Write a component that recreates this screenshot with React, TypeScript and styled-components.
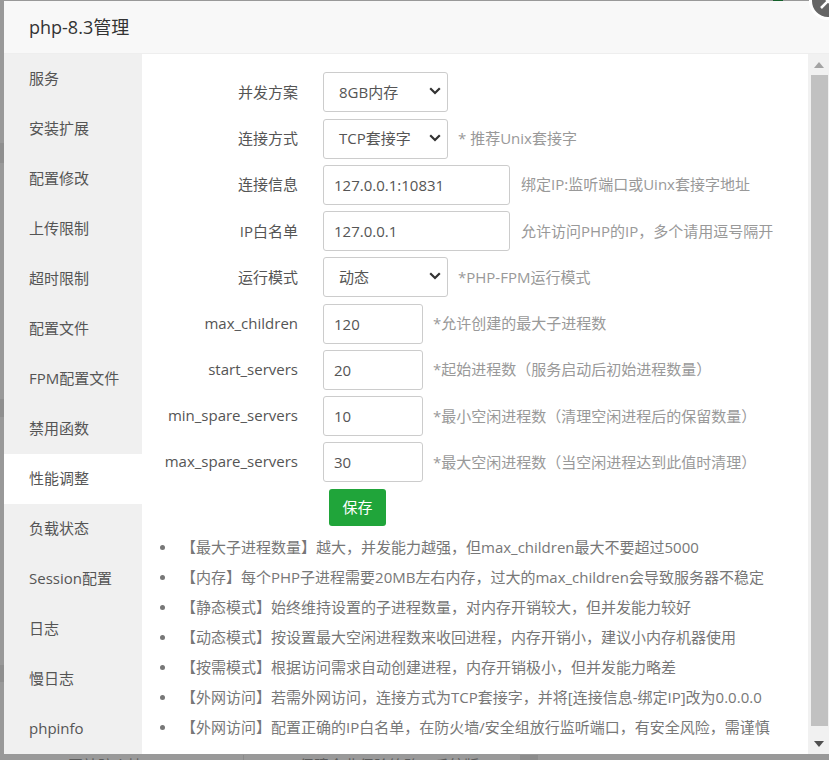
import { createGlobalStyle, styled } from 'styled-components'

const fontStack = `'Open Sans', 'Noto Sans CJK SC', sans-serif`

const GlobalStyle = createGlobalStyle`
    html, body {
        margin: 0;
        padding: 0;
        height: 760px;
        overflow: hidden;
        background: #999;
        font-family: ${fontStack};
    }
`

const Page = styled.div`
    position: relative;
    width: 829px;
    height: 760px;
    padding: 1px 0 0 4px;
    box-sizing: border-box;
    background: #999;
    overflow: hidden;
`

// the dimmed page that shows around the modal
const BackdropText = styled.span<{ $left: number }>`
    position: absolute;
    top: 755px;
    left: ${(p) => p.$left}px;
    font-size: 15px;
    line-height: 20px;
    color: #5c5c5c;
    white-space: nowrap;
`

const BackdropLine = styled.div`
    position: absolute;
    top: 755px;
    left: 243px;
    width: 1px;
    height: 5px;
    background: #8a8a8a;
`

const BackdropBlock = styled.div`
    position: absolute;
    top: 755px;
    left: 520px;
    width: 18px;
    height: 5px;
    background: #8c8c8c;
`

const BackdropBand = styled.div<{ $top: number; $h: number }>`
    position: absolute;
    left: 0;
    top: ${(p) => p.$top}px;
    width: 4px;
    height: ${(p) => p.$h}px;
    background: #8f8f8f;
`

const BackdropMark = styled.div`
    position: absolute;
    top: 0;
    left: 773px;
    width: 10px;
    height: 1px;
    background: #14602a;
`

const Modal = styled.div`
    position: relative;
    width: 825px;
    height: 753px;
    background: #fff;
    display: flex;
    flex-direction: column;
`

const Title = styled.div`
    height: 53px;
    flex: none;
    box-sizing: border-box;
    padding-left: 25px;
    line-height: 53px;
    font-size: 18px;
    color: #333;
    background: #f8f8f8;
    border-bottom: 1px solid #eee;
`

const Body = styled.div`
    flex: 1;
    display: flex;
    min-height: 0;
`

const Side = styled.div`
    width: 138px;
    flex: none;
    background: #f0f0f0;
`

const SideItem = styled.div<{ $active?: boolean }>`
    height: 50px;
    line-height: 48px;
    padding-left: 25px;
    font-size: 15px;
    color: #555;
    white-space: nowrap;
    background: ${(p) => (p.$active ? '#fff' : 'transparent')};
`

const Content = styled.div`
    flex: 1;
    box-sizing: border-box;
    padding-top: 18.3px;
    min-width: 0;
`

const Row = styled.div`
    display: flex;
    align-items: center;
    height: 40px;
    margin-bottom: 6.25px;
`

const Label = styled.label`
    width: 156px;
    margin-right: 25px;
    padding-bottom: 2px;
    flex: none;
    text-align: right;
    font-size: 15px;
    color: #555;
    white-space: nowrap;
`

const SelectBox = styled.div<{ $w: number }>`
    width: ${(p) => p.$w}px;
    height: 40px;
    box-sizing: border-box;
    display: flex;
    align-items: center;
    justify-content: space-between;
    padding: 0 6px 2px 15px;
    border: 1px solid #ccc;
    border-radius: 3px;
    font-size: 15px;
    color: #555;
`

const Input = styled.input<{ $w: number }>`
    width: ${(p) => p.$w}px;
    height: 40px;
    box-sizing: border-box;
    padding: 0 10px;
    border: 1px solid #ccc;
    border-radius: 3px;
    font: 15px ${fontStack};
    color: #555;
    outline: none;
`

const Hint = styled.span<{ $gap: number }>`
    margin-left: ${(p) => p.$gap}px;
    padding-bottom: 2px;
    font-size: 15px;
    color: #999;
    white-space: nowrap;
`

const SaveButton = styled.button`
    display: block;
    width: 57px;
    height: 37px;
    margin: 0 0 0 187px;
    padding: 0 0 2px;
    border: none;
    border-radius: 3px;
    background: #20a53a;
    color: #fff;
    font: 15px ${fontStack};
`

const Tips = styled.ul`
    margin: 7.5px 0 0;
    padding: 0 0 0 16px;
    list-style: none;
`

const Tip = styled.li`
    position: relative;
    height: 30px;
    line-height: 28px;
    padding-left: 23px;
    font-size: 15px;
    color: #777;
    white-space: nowrap;

    &::before {
        content: '';
        position: absolute;
        left: 2px;
        top: 12px;
        width: 5px;
        height: 5px;
        border-radius: 50%;
        background: #777;
    }
`

const Scrollbar = styled.div`
    width: 21px;
    flex: none;
    background: #f1f1f1;
    display: flex;
    flex-direction: column;
    align-items: center;
`

const ScrollArrow = styled.div`
    height: 21px;
    flex: none;
    display: flex;
    align-items: center;
    justify-content: center;
`

const ScrollThumb = styled.div`
    flex: 1;
    width: 17px;
    background: #c1c1c1;
    margin: 0 0 7px 1px;
`

const CloseButton = styled.div`
    position: absolute;
    top: -18px;
    left: 809px;
    width: 38px;
    height: 38px;
    box-sizing: border-box;
    border-radius: 50%;
    border: 3px solid #fff;
    background: #666;
    display: flex;
    align-items: center;
    justify-content: center;
`

const sideItems = [
    '服务',
    '安装扩展',
    '配置修改',
    '上传限制',
    '超时限制',
    '配置文件',
    'FPM配置文件',
    '禁用函数',
    '性能调整',
    '负载状态',
    'Session配置',
    '日志',
    '慢日志',
    'phpinfo',
]

const numberRows = [
    ['max_children', '120', '*允许创建的最大子进程数'],
    ['start_servers', '20', '*起始进程数（服务启动后初始进程数量）'],
    ['min_spare_servers', '10', '*最小空闲进程数（清理空闲进程后的保留数量）'],
    ['max_spare_servers', '30', '*最大空闲进程数（当空闲进程达到此值时清理）'],
]

const tips = [
    '【最大子进程数量】越大，并发能力越强，但max_children最大不要超过5000',
    '【内存】每个PHP子进程需要20MB左右内存，过大的max_children会导致服务器不稳定',
    '【静态模式】始终维持设置的子进程数量，对内存开销较大，但并发能力较好',
    '【动态模式】按设置最大空闲进程数来收回进程，内存开销小，建议小内存机器使用',
    '【按需模式】根据访问需求自动创建进程，内存开销极小，但并发能力略差',
    '【外网访问】若需外网访问，连接方式为TCP套接字，并将[连接信息-绑定IP]改为0.0.0.0',
    '【外网访问】配置正确的IP白名单，在防火墙/安全组放行监听端口，有安全风险，需谨慎',
]

const Chevron = () => (
    <svg width="12" height="8" viewBox="0 0 12 8">
        <path d="M1.2 1.2 6 6l4.8-4.8" fill="none" stroke="#333" strokeWidth="2.2" />
    </svg>
)

const Select = ({ w, children }: { w: number; children: string }) => (
    <SelectBox $w={w}>
        <span>{children}</span>
        <Chevron />
    </SelectBox>
)

export default function App() {
    return (
        <Page>
            <GlobalStyle />
            <BackdropBand $top={143} $h={20} />
            <BackdropBand $top={399} $h={18} />
            <BackdropBand $top={665} $h={17} />
            <BackdropMark />
            <BackdropText $left={68}>网站防火墙</BackdropText>
            <BackdropLine />
            <BackdropText $left={299}>保障企业保险策略，系统版</BackdropText>
            <BackdropBlock />
            <Modal>
                <Title>php-8.3管理</Title>
                <Body>
                    <Side>
                        {sideItems.map((s) => (
                            <SideItem key={s} $active={s === '性能调整'}>
                                {s}
                            </SideItem>
                        ))}
                    </Side>
                    <Content>
                        <Row>
                            <Label>并发方案</Label>
                            <Select w={125}>8GB内存</Select>
                        </Row>
                        <Row>
                            <Label>连接方式</Label>
                            <Select w={125}>TCP套接字</Select>
                            <Hint $gap={10}>* 推荐Unix套接字</Hint>
                        </Row>
                        <Row>
                            <Label>连接信息</Label>
                            <Input $w={187} defaultValue="127.0.0.1:10831" />
                            <Hint $gap={11}>绑定IP:监听端口或Uinx套接字地址</Hint>
                        </Row>
                        <Row>
                            <Label>IP白名单</Label>
                            <Input $w={187} defaultValue="127.0.0.1" />
                            <Hint $gap={11}>允许访问PHP的IP，多个请用逗号隔开</Hint>
                        </Row>
                        <Row>
                            <Label>运行模式</Label>
                            <Select w={125}>动态</Select>
                            <Hint $gap={10}>*PHP-FPM运行模式</Hint>
                        </Row>
                        {numberRows.map(([name, value, hint]) => (
                            <Row key={name}>
                                <Label>{name}</Label>
                                <Input $w={100} defaultValue={value} />
                                <Hint $gap={10}>{hint}</Hint>
                            </Row>
                        ))}
                        <SaveButton>保存</SaveButton>
                        <Tips>
                            {tips.map((t) => (
                                <Tip key={t}>{t}</Tip>
                            ))}
                        </Tips>
                    </Content>
                    <Scrollbar>
                        <ScrollArrow>
                            <svg width="10" height="6" viewBox="0 0 10 6">
                                <path d="M5 0 10 6H0z" fill="#a3a3a3" />
                            </svg>
                        </ScrollArrow>
                        <ScrollThumb />
                        <ScrollArrow>
                            <svg width="10" height="6" viewBox="0 0 10 6">
                                <path d="M0 0h10L5 6z" fill="#505050" />
                            </svg>
                        </ScrollArrow>
                    </Scrollbar>
                </Body>
            </Modal>
            <CloseButton>
                <svg width="20" height="20" viewBox="0 0 20 20">
                    <path d="M3 3 17 17M17 3 3 17" stroke="#fff" strokeWidth="2.5" />
                </svg>
            </CloseButton>
        </Page>
    )
}
